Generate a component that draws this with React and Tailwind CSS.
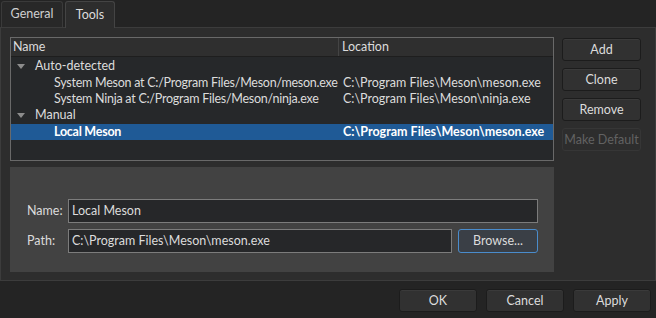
import React from 'react';

const rows = [
    { label: "Auto-detected", level: 0, group: true },
    { label: "System Meson at C:/Program Files/Meson/meson.exe", loc: "C:\\Program Files\\Meson\\meson.exe", level: 1 },
    { label: "System Ninja at C:/Program Files/Meson/ninja.exe", loc: "C:\\Program Files\\Meson\\ninja.exe", level: 1 },
    { label: "Manual", level: 0, group: true },
    { label: "Local Meson", loc: "C:\\Program Files\\Meson\\meson.exe", level: 1, selected: true },
];

function Btn({ children, disabled, className = "" }) {
    return (
        <button
            className={
                "h-[23px] rounded-[3px] border text-center leading-[21px] whitespace-nowrap " +
                (disabled
                    ? "border-[#363636] bg-[#2d2d2d] text-[#626262] "
                    : "border-[#1c1c1c] bg-[#313131] text-[#dcdcdc] shadow-[inset_0_1px_0_#3a3a3a] ") +
                className
            }
        >
            {children}
        </button>
    );
}

export default function App() {
    return (
        <div
            className="w-[656px] h-[318px] bg-[#242424] text-[12.5px] text-[#dcdcdc] flex flex-col"
            style={{ fontFamily: 'Lato, "Noto Sans", sans-serif' }}
        >
            {/* tabs */}
            <div className="flex h-[27px] items-end pl-[1px] gap-[2px]">
                <div className="h-[26px] w-[62px] rounded-t-[3px] border border-b-0 border-[#3a3a3a] bg-[#282828] text-[#cfcfcf] flex items-center justify-center">
                    General
                </div>
                <div className="h-[27px] w-[50px] rounded-t-[3px] border border-b-0 border-[#444] bg-[#2d2d2d] flex items-center justify-center relative top-[1px]">
                    Tools
                </div>
            </div>

            {/* pane */}
            <div className="h-[254px] border border-[#3c3c3c] bg-[#2d2d2d] flex gap-[8px] pl-[9px] pt-[9px] pr-[14px]">
                <div className="w-[544px] flex flex-col gap-[6px]">
                    {/* tree */}
                    <div className="h-[124px] border border-[#696969] bg-[#26282a] flex flex-col">
                        <div className="h-[19px] flex bg-[#2f2f2f] border-b border-[#1e1e1e] leading-[18px]">
                            <div className="w-[328px] pl-[2px] border-r border-[#444]">Name</div>
                            <div className="pl-[3px]">Location</div>
                        </div>
                        <div className="pt-[1px]">
                            {rows.map((r, i) => (
                                <div
                                    key={i}
                                    className={
                                        "h-[16.4px] flex items-center leading-[16px] " +
                                        (r.selected ? "bg-[#1f5a96] font-bold text-white" : "")
                                    }
                                >
                                    <div className="w-[329px] shrink-0 flex items-center whitespace-nowrap">
                                        {r.group ? (
                                            <>
                                                <svg width="8" height="5" viewBox="0 0 8 5" className="ml-[6px] mr-[10px]">
                                                    <path d="M0 0 H8 L4 5 Z" fill="#8c8c8c" />
                                                </svg>
                                                <span>{r.label}</span>
                                            </>
                                        ) : (
                                            <span className="pl-[43px] tracking-[-0.25px]">{r.label}</span>
                                        )}
                                    </div>
                                    {r.loc && <div className="pl-[3px] whitespace-nowrap">{r.loc}</div>}
                                </div>
                            ))}
                        </div>
                    </div>

                    {/* edit panel */}
                    <div className="h-[105px] bg-[#424242] pt-[32px] pl-[17px] pr-[16px] flex flex-col gap-[6px]">
                        <div className="flex items-center">
                            <span className="w-[41px]">Name:</span>
                            <div className="flex-1 h-[24px] border border-[#7c7c7c] bg-[#262729] pl-[3px] leading-[22px]">
                                Local Meson
                            </div>
                        </div>
                        <div className="flex items-center gap-[6px]">
                            <span className="w-[35px]">Path:</span>
                            <div className="flex-1 h-[24px] border border-[#7c7c7c] bg-[#262729] pl-[3px] leading-[22px]">
                                C:\Program Files\Meson\meson.exe
                            </div>
                            <button className="w-[80px] h-[24px] rounded-[3px] border border-[#4a8ccc] bg-[#3a3f46] text-[#dcdcdc]">
                                Browse...
                            </button>
                        </div>
                    </div>
                </div>

                {/* side buttons */}
                <div className="w-[79px] flex flex-col gap-[7px] pt-[1px]">
                    <Btn>Add</Btn>
                    <Btn>Clone</Btn>
                    <Btn>Remove</Btn>
                    <Btn disabled>Make Default</Btn>
                </div>
            </div>

            {/* dialog buttons */}
            <div className="flex justify-end gap-[9px] pr-[5px] pt-[8px]">
                <Btn className="w-[78px]">OK</Btn>
                <Btn className="w-[78px]">Cancel</Btn>
                <Btn className="w-[78px]">Apply</Btn>
            </div>
        </div>
    );
}
